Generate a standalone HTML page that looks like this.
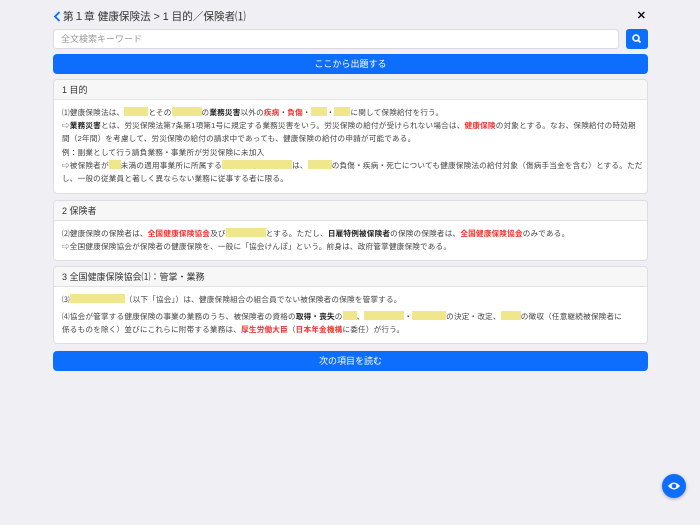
<!DOCTYPE html>
<html><head><meta charset="utf-8"><style>
*{box-sizing:border-box;margin:0;padding:0}
body{width:700px;height:525px;background:#efeff4;font-family:"Liberation Sans","Noto Sans CJK JP",sans-serif;color:#333;position:relative;overflow:hidden}
.wrap{position:absolute;left:53px;width:595px;top:0}
.title{position:absolute;top:9px;left:0;font-size:10.6px;color:#333;height:16px;line-height:16px}
.title svg{vertical-align:-2px;margin-right:2px}
.close{position:absolute;right:2px;top:9px;font-size:11px;font-weight:bold;color:#111}
.search{position:absolute;top:29px;left:0;width:566px;height:20px;background:#fff;border:1px solid #dcdce0;border-radius:3px;font-size:9px;color:#999;padding-left:7px;line-height:18px}
.sbtn{position:absolute;top:29px;right:0;width:22px;height:20px;background:#0d6efd;border-radius:3px}
.btn{position:absolute;left:0;width:595px;height:20px;background:#0d6efd;border-radius:4px;color:#fff;font-size:9px;text-align:center;line-height:20px}
.card{position:absolute;left:0;width:595px;background:#fff;border:1px solid #dedee2;border-radius:4px;overflow:hidden}
.card .h{height:20px;background:#f7f7f7;border-bottom:1px solid #e3e3e3;font-size:9px;line-height:20px;padding-left:8px;color:#333}
.card .b{padding:6px 8px;font-size:7.6px;letter-spacing:0.2px;line-height:13.2px;color:#444;white-space:nowrap}
.y{display:inline-block;background:#f0e68c;height:9px;vertical-align:-1px}
.r{color:#e33;font-weight:bold}
.k{font-weight:bold;color:#222}
.eye{position:absolute;left:662px;top:474px;width:24px;height:24px;border-radius:50%;background:#0d6efd;box-shadow:0 1px 3px rgba(0,0,0,.3)}
</style></head><body>
<div class="wrap">
<div class="title"><svg width="8" height="11" viewBox="0 0 8 11"><path d="M6.5 1L2 5.5 6.5 10" fill="none" stroke="#0d6efd" stroke-width="1.8"/></svg>第１章 健康保険法 &gt; 1 目的／保険者⑴</div>
<div class="close">✕</div>
<div class="search">全文検索キーワード</div>
<div class="sbtn"><svg width="22" height="20" viewBox="0 0 22 20"><circle cx="10" cy="9" r="3" fill="none" stroke="#fff" stroke-width="1.6"/><path d="M12.2 11.2L14.5 13.5" stroke="#fff" stroke-width="1.8"/></svg></div>
<div class="btn" style="top:54px">ここから出題する</div>
<div class="card" style="top:79px;height:115px"><div class="h">1 目的</div><div class="b">
⑴健康保険法は、<span class="y" style="width:24px"></span>とその<span class="y" style="width:30px"></span>の<span class="k">業務災害</span>以外の<span class="r">疾病</span>・<span class="r">負傷</span>・<span class="y" style="width:16px"></span>・<span class="y" style="width:16px"></span>に関して保険給付を行う。<br>
⇨<span class="k">業務災害</span>とは、労災保険法第7条第1項第1号に規定する業務災害をいう。労災保険の給付が受けられない場合は、<span class="r">健康保険</span>の対象とする。なお、保険給付の時効期<br>
間（2年間）を考慮して、労災保険の給付の請求中であっても、健康保険の給付の申請が可能である。<br>
例：副業として行う請負業務・事業所が労災保険に未加入<br>
⇨被保険者が<span class="y" style="width:12px"></span>未満の適用事業所に所属する<span class="y" style="width:70px"></span>は、<span class="y" style="width:24px"></span>の負傷・疾病・死亡についても健康保険法の給付対象（傷病手当金を含む）とする。ただ<br>
し、一般の従業員と著しく異ならない業務に従事する者に限る。
</div></div>
<div class="card" style="top:200px;height:61px"><div class="h">2 保険者</div><div class="b">
⑵健康保険の保険者は、<span class="r">全国健康保険協会</span>及び<span class="y" style="width:40px"></span>とする。ただし、<span class="k">日雇特例被保険者</span>の保険の保険者は、<span class="r">全国健康保険協会</span>のみである。<br>
⇨全国健康保険協会が保険者の健康保険を、一般に「協会けんぽ」という。前身は、政府管掌健康保険である。
</div></div>
<div class="card" style="top:266px;height:78px"><div class="h">3 全国健康保険協会⑴：管掌・業務</div><div class="b" style="line-height:13.5px">
⑶<span class="y" style="width:55px"></span>（以下「協会」）は、健康保険組合の組合員でない被保険者の保険を管掌する。<br><div style="height:3px"></div>
⑷協会が管掌する健康保険の事業の業務のうち、被保険者の資格の<span class="k">取得・喪失</span>の<span class="y" style="width:14px"></span>、<span class="y" style="width:40px"></span>・<span class="y" style="width:34px"></span>の決定・改定、<span class="y" style="width:20px"></span>の徴収（任意継続被保険者に<br>
係るものを除く）並びにこれらに附帯する業務は、<span class="r">厚生労働大臣</span>（<span class="r">日本年金機構</span>に委任）が行う。
</div></div>
<div class="btn" style="top:351px">次の項目を読む</div>
</div>
<div class="eye"><svg width="24" height="24" viewBox="0 0 24 24"><path d="M6 12Q12 5 18 12Q12 19 6 12Z" fill="#fff"/><circle cx="12" cy="12" r="2.3" fill="#0d6efd"/></svg></div>
</body></html>
